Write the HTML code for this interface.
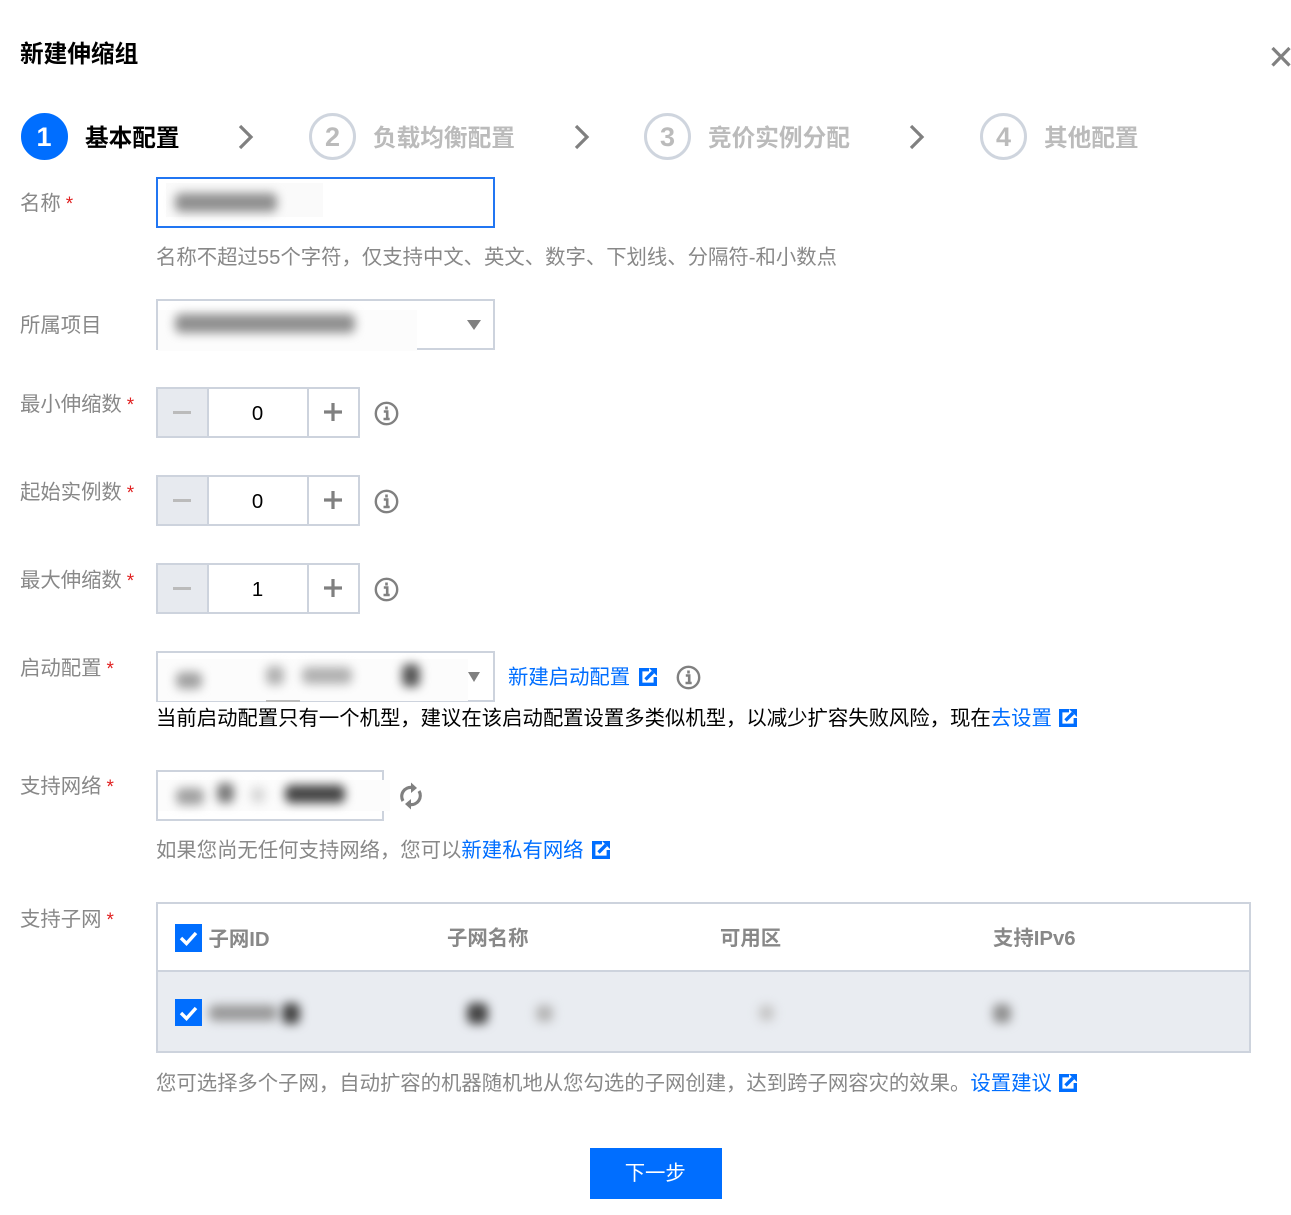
<!DOCTYPE html>
<html lang="zh-CN">
<head>
<meta charset="utf-8">
<title>新建伸缩组</title>
<style>
html,body{margin:0;padding:0;background:#fff;}
body{position:relative;width:1291px;height:1215px;overflow:hidden;font-family:"Liberation Sans","Noto Sans CJK SC",sans-serif;font-size:20.38px;color:#888;}
.t{position:absolute;white-space:nowrap;line-height:30px;height:30px;}
.g{color:#888;}
.k{color:#000;}
.b{color:#006eff;}
.req{color:#e02020;font-size:19px;margin-left:5px;}
.box{position:absolute;box-sizing:border-box;border:2px solid #cdd3dd;background:#fff;}
.blob{position:absolute;filter:blur(5px);border-radius:6px;}
.patch{position:absolute;background:#fafafa;}
.circle{position:absolute;box-sizing:border-box;width:47px;height:47px;border-radius:50%;top:113px;text-align:center;line-height:43px;font-size:27px;font-weight:bold;color:#bbb;border:3px solid #cfd5de;}
.circle.on{background:#006eff;border-color:#006eff;color:#fff;}
.st{position:absolute;top:124px;line-height:30px;font-size:23.65px;font-weight:bold;color:#bbb;white-space:nowrap;}
svg{position:absolute;display:block;}
.num{position:absolute;width:100px;text-align:center;left:207.5px;color:#000;line-height:30px;}
.dec{position:absolute;left:158px;width:49px;height:47px;box-sizing:border-box;background:#e7eaef;}
.th{position:absolute;top:924px;font-weight:bold;color:#888;line-height:30px;white-space:nowrap;}
.cb{position:absolute;left:174.5px;width:27.5px;height:27.5px;background:#006eff;}
.div{position:absolute;width:2px;height:47px;background:#cdd3dd;}
</style>
</head>
<body>

<div class="t" style="left:20px;top:40px;font-size:23.65px;font-weight:bold;color:#000;">新建伸缩组</div>
<svg style="left:1270px;top:45px" width="21" height="24" viewBox="0 0 21 24"><path d="M2.5 3 L19.5 20.5 M19.5 3 L2.5 20.5" stroke="#808080" stroke-width="3.2" fill="none"/></svg>

<!-- steps -->
<div class="circle on" style="left:21px;text-indent:-1px">1</div>
<div class="st" style="left:85px;color:#000">基本配置</div>
<svg style="left:237px;top:124px" width="18" height="26" viewBox="0 0 18 26"><path d="M3 2 L14 13 L3 24" stroke="#808080" stroke-width="3.2" fill="none"/></svg>
<div class="circle" style="left:309px">2</div>
<div class="st" style="left:373px">负载均衡配置</div>
<svg style="left:572.5px;top:124px" width="18" height="26" viewBox="0 0 18 26"><path d="M3 2 L14 13 L3 24" stroke="#808080" stroke-width="3.2" fill="none"/></svg>
<div class="circle" style="left:644px">3</div>
<div class="st" style="left:708px">竞价实例分配</div>
<svg style="left:908px;top:124px" width="18" height="26" viewBox="0 0 18 26"><path d="M3 2 L14 13 L3 24" stroke="#808080" stroke-width="3.2" fill="none"/></svg>
<div class="circle" style="left:980px">4</div>
<div class="st" style="left:1044px">其他配置</div>

<!-- name -->
<div class="t g" style="left:20px;top:189px">名称<span class="req">*</span></div>
<div class="box" style="left:156px;top:177px;width:339px;height:51px;border:2px solid #2176f2"></div>
<div class="patch" style="left:166px;top:183px;width:157px;height:34px"></div>
<div class="blob" style="left:175px;top:193px;width:102px;height:19px;background:#8f8f8f"></div>
<div class="t g" style="left:156px;top:243px">名称不超过55个字符，仅支持中文、英文、数字、下划线、分隔符-和小数点</div>

<!-- project -->
<div class="t g" style="left:20px;top:311px">所属项目</div>
<div class="box" style="left:156px;top:299px;width:339px;height:51px"></div>
<div class="patch" style="left:158px;top:310px;width:259px;height:41px;background:#fcfcfc"></div>
<div class="blob" style="left:175px;top:314px;width:180px;height:19px;background:#8f8f8f"></div>
<svg style="left:466px;top:319px" width="16" height="12" viewBox="0 0 16 12"><path d="M1 1 H15 L8 11 Z" fill="#808080"/></svg>

<!-- steppers -->
<div class="t g" style="left:20px;top:390px">最小伸缩数<span class="req">*</span></div>
<div class="box" style="left:156px;top:387px;width:204px;height:51px"></div>
<div class="dec" style="top:389px"></div>
<div class="div" style="left:207px;top:389px"></div>
<div class="div" style="left:307px;top:389px"></div>
<div style="position:absolute;left:173px;top:411px;width:18px;height:3px;background:#bbb"></div>
<div class="num" style="top:399px">0</div>
<svg style="left:323px;top:402px" width="20" height="20" viewBox="0 0 20 20"><path d="M1 10 H19 M10 1 V19" stroke="#808080" stroke-width="3.2" fill="none"/></svg>
<svg style="left:374px;top:400.5px" width="25" height="25" viewBox="0 0 25 25"><circle cx="12.5" cy="12.5" r="10.7" stroke="#808080" stroke-width="2.4" fill="none"/><path d="M12.5 5.5 v3 M9.8 10.5 h3.4 v7.5 M9.5 18 h6.2" stroke="#808080" stroke-width="2.6" fill="none"/></svg>

<div class="t g" style="left:20px;top:478px">起始实例数<span class="req">*</span></div>
<div class="box" style="left:156px;top:475px;width:204px;height:51px"></div>
<div class="dec" style="top:477px"></div>
<div class="div" style="left:207px;top:477px"></div>
<div class="div" style="left:307px;top:477px"></div>
<div style="position:absolute;left:173px;top:499px;width:18px;height:3px;background:#bbb"></div>
<div class="num" style="top:487px">0</div>
<svg style="left:323px;top:490px" width="20" height="20" viewBox="0 0 20 20"><path d="M1 10 H19 M10 1 V19" stroke="#808080" stroke-width="3.2" fill="none"/></svg>
<svg style="left:374px;top:488.5px" width="25" height="25" viewBox="0 0 25 25"><circle cx="12.5" cy="12.5" r="10.7" stroke="#808080" stroke-width="2.4" fill="none"/><path d="M12.5 5.5 v3 M9.8 10.5 h3.4 v7.5 M9.5 18 h6.2" stroke="#808080" stroke-width="2.6" fill="none"/></svg>

<div class="t g" style="left:20px;top:566px">最大伸缩数<span class="req">*</span></div>
<div class="box" style="left:156px;top:563px;width:204px;height:51px"></div>
<div class="dec" style="top:565px"></div>
<div class="div" style="left:207px;top:565px"></div>
<div class="div" style="left:307px;top:565px"></div>
<div style="position:absolute;left:173px;top:587px;width:18px;height:3px;background:#bbb"></div>
<div class="num" style="top:575px">1</div>
<svg style="left:323px;top:578px" width="20" height="20" viewBox="0 0 20 20"><path d="M1 10 H19 M10 1 V19" stroke="#808080" stroke-width="3.2" fill="none"/></svg>
<svg style="left:374px;top:576.5px" width="25" height="25" viewBox="0 0 25 25"><circle cx="12.5" cy="12.5" r="10.7" stroke="#808080" stroke-width="2.4" fill="none"/><path d="M12.5 5.5 v3 M9.8 10.5 h3.4 v7.5 M9.5 18 h6.2" stroke="#808080" stroke-width="2.6" fill="none"/></svg>

<!-- launch config -->
<div class="t g" style="left:20px;top:654px">启动配置<span class="req">*</span></div>
<div class="box" style="left:156px;top:651px;width:339px;height:51px"></div>
<div class="patch" style="left:158px;top:659px;width:310px;height:42px;background:#fcfcfc"></div>
<div class="blob" style="left:176px;top:672px;width:26px;height:17px;background:#a0a0a0"></div>
<div class="blob" style="left:266px;top:666px;width:18px;height:19px;background:#b0b0b0"></div>
<div class="blob" style="left:302px;top:667px;width:50px;height:17px;background:#b0b0b0"></div>
<div class="blob" style="left:402px;top:664px;width:18px;height:23px;background:#555"></div>
<div style="position:absolute;left:266px;top:700px;width:34px;height:2px;background:#bbb"></div>
<svg style="left:466px;top:671px" width="16" height="12" viewBox="0 0 16 12"><path d="M2 1 H14 L8 11 Z" fill="#808080"/></svg>
<div class="t b" style="left:508px;top:663px">新建启动配置</div>
<svg style="left:638.5px;top:668px" width="18" height="18" viewBox="0 0 18 18"><path d="M10 1.7 H1.7 V16.3 H16.3 V9" stroke="#006eff" stroke-width="3.4" fill="none"/><path d="M6.5 11.5 L14 4" stroke="#006eff" stroke-width="3.4" fill="none"/><path d="M10 0 H18 V8 Z" fill="#006eff"/></svg>
<svg style="left:676px;top:664.5px" width="25" height="25" viewBox="0 0 25 25"><circle cx="12.5" cy="12.5" r="10.7" stroke="#808080" stroke-width="2.4" fill="none"/><path d="M12.5 5.5 v3 M9.8 10.5 h3.4 v7.5 M9.5 18 h6.2" stroke="#808080" stroke-width="2.6" fill="none"/></svg>
<div class="t k" style="left:156px;top:704px">当前启动配置只有一个机型，建议在该启动配置设置多类似机型，以减少扩容失败风险，现在<span class="b">去设置</span></div>
<svg style="left:1058.5px;top:709px" width="18" height="18" viewBox="0 0 18 18"><path d="M10 1.7 H1.7 V16.3 H16.3 V9" stroke="#006eff" stroke-width="3.4" fill="none"/><path d="M6.5 11.5 L14 4" stroke="#006eff" stroke-width="3.4" fill="none"/><path d="M10 0 H18 V8 Z" fill="#006eff"/></svg>

<!-- network -->
<div class="t g" style="left:20px;top:772px">支持网络<span class="req">*</span></div>
<div class="box" style="left:156px;top:770px;width:228px;height:51px"></div>
<div class="patch" style="left:158px;top:780px;width:232px;height:31px;background:#fcfcfc"></div>
<div class="blob" style="left:176px;top:788px;width:28px;height:17px;background:#a0a0a0"></div>
<div class="blob" style="left:217px;top:783px;width:17px;height:20px;background:#777"></div>
<div class="blob" style="left:251px;top:787px;width:14px;height:16px;background:#d5d5d5"></div>
<div class="blob" style="left:285px;top:785px;width:60px;height:18px;background:#444"></div>
<svg style="left:398.5px;top:782px" width="24" height="28" viewBox="0 0 24 28"><path d="M4 19 A9 9 0 0 1 13 5.5" stroke="#808080" stroke-width="3.2" fill="none"/><path d="M12 0.5 L18 6 L12 11 Z" fill="#808080"/><path d="M20 9 A9 9 0 0 1 11 22.5" stroke="#808080" stroke-width="3.2" fill="none"/><path d="M12 17 L6 22 L12 27.5 Z" fill="#808080"/></svg>
<div class="t g" style="left:156px;top:836px">如果您尚无任何支持网络，您可以<span class="b">新建私有网络</span></div>
<svg style="left:591.5px;top:841px" width="18" height="18" viewBox="0 0 18 18"><path d="M10 1.7 H1.7 V16.3 H16.3 V9" stroke="#006eff" stroke-width="3.4" fill="none"/><path d="M6.5 11.5 L14 4" stroke="#006eff" stroke-width="3.4" fill="none"/><path d="M10 0 H18 V8 Z" fill="#006eff"/></svg>

<!-- subnet -->
<div class="t g" style="left:20px;top:905px">支持子网<span class="req">*</span></div>
<div class="box" style="left:156px;top:902px;width:1095px;height:151px"></div>
<div style="position:absolute;left:158px;top:970px;width:1091px;height:81px;background:#e9ecf1;border-top:2px solid #cdd3dd;box-sizing:border-box"></div>
<div class="cb" style="top:924px"></div>
<svg style="left:174px;top:924px" width="28" height="28" viewBox="0 0 28 28"><path d="M7 14 L12.5 19.5 L22 9" stroke="#fff" stroke-width="3.4" fill="none"/></svg>
<div class="th" style="left:208.5px;top:925px">子网ID</div>
<div class="th" style="left:447px">子网名称</div>
<div class="th" style="left:720px">可用区</div>
<div class="th" style="left:993px">支持IPv6</div>
<div class="cb" style="top:998.5px"></div>
<svg style="left:174px;top:999px" width="28" height="28" viewBox="0 0 28 28"><path d="M7 14 L12.5 19.5 L22 9" stroke="#fff" stroke-width="3.4" fill="none"/></svg>
<div class="blob" style="left:209px;top:1005px;width:68px;height:16px;background:#999"></div>
<div class="blob" style="left:282px;top:1003px;width:18px;height:21px;background:#444"></div>
<div class="blob" style="left:467px;top:1003px;width:21px;height:21px;background:#444"></div>
<div class="blob" style="left:536px;top:1005px;width:17px;height:17px;background:#b5b5b5"></div>
<div class="blob" style="left:759px;top:1005px;width:15px;height:16px;background:#c5c5c5"></div>
<div class="blob" style="left:993px;top:1004px;width:18px;height:19px;background:#8f8f8f"></div>
<div class="t g" style="left:156px;top:1069px">您可选择多个子网，自动扩容的机器随机地从您勾选的子网创建，达到跨子网容灾的效果。<span class="b">设置建议</span></div>
<svg style="left:1058.5px;top:1074px" width="18" height="18" viewBox="0 0 18 18"><path d="M10 1.7 H1.7 V16.3 H16.3 V9" stroke="#006eff" stroke-width="3.4" fill="none"/><path d="M6.5 11.5 L14 4" stroke="#006eff" stroke-width="3.4" fill="none"/><path d="M10 0 H18 V8 Z" fill="#006eff"/></svg>

<!-- button -->
<div style="position:absolute;left:590px;top:1148px;width:131.5px;height:51px;background:#006eff;color:#fff;text-align:center;line-height:52px;text-indent:-1px">下一步</div>

</body>
</html>
